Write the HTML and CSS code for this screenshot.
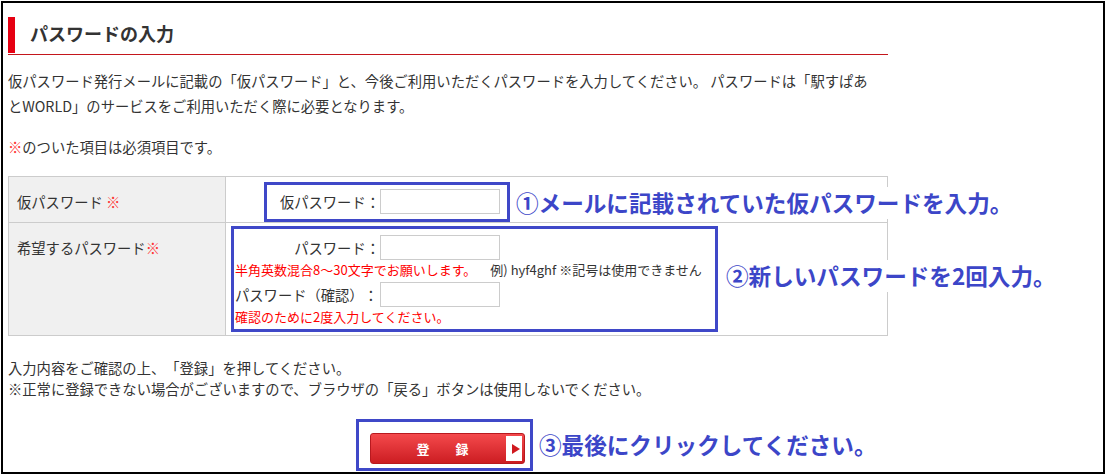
FILE: index.html
```html
<!DOCTYPE html>
<html>
  <head>
    <meta charset="utf-8">
    <title>パスワードの入力</title>
    <link rel="stylesheet" href="styles.css">
  </head>
  <body>
    <div class="frame">
      <div class="content">
        <h2 class="page-title"><span>パスワードの入力</span></h2>

        <p class="intro">
          仮パスワード発行メールに記載の「仮パスワード」と、今後ご利用いただくパスワードを入力してください。 パスワードは「駅すぱあ<br>とWORLD」のサービスをご利用いただく際に必要となります。
        </p>
        <p class="intro required-note"><span class="mark">※</span>のついた項目は必須項目です。</p>

        <table class="form-table">
          <tr>
            <th>仮パスワード <span class="mark">※</span></th>
            <td>
              <div class="field-grid">
                <label for="tmpPassword">仮パスワード：</label>
                <input type="password" id="tmpPassword" name="tmpPassword" />
              </div>
            </td>
          </tr>
          <tr>
            <th>希望するパスワード<span class="mark">※</span></th>
            <td>
              <div class="field-grid">
                <label for="newPassword">パスワード：</label>
                <input type="password" id="newPassword" name="newPassword" />
                <div class="note"><span class="warn">半角英数混合8～30文字でお願いします。</span><span class="example">例) hyf4ghf ※記号は使用できません</span></div>
                <label for="newPassword2" class="label-left">パスワード（確認）：</label>
                <input type="password" id="newPassword2" name="newPassword2" class="second" />
                <div class="note"><span class="warn">確認のために2度入力してください。</span></div>
              </div>
            </td>
          </tr>
        </table>

        <p class="after-text">
          入力内容をご確認の上、「登録」を押してください。<br>
          ※正常に登録できない場合がございますので、ブラウザの「戻る」ボタンは使用しないでください。
        </p>

        <div class="submit-row">
          <button type="submit" class="submit-btn">
            <span class="btn-label">登　　録</span>
            <span class="btn-arrow"><span class="triangle"></span></span>
          </button>
        </div>
      </div>

      <!-- annotations drawn over the form -->
      <div class="mark-box box1"></div>
      <div class="mark-box box2"></div>
      <div class="mark-box box3"></div>
      <div class="callout callout1">①メールに記載されていた仮パスワードを入力。</div>
      <div class="callout callout2">②新しいパスワードを2回入力。</div>
      <div class="callout callout3">③最後にクリックしてください。</div>
    </div>
  </body>
</html>
```

FILE: styles.css
```css
body {
  margin: 0;
  background: #fff;
  font-family: "Noto Sans CJK JP", "Noto Sans", sans-serif;
  color: #333;
  text-spacing-trim: space-all;
}
.frame {
  position: relative;
  margin: 1px;
  width: 1104px;
  height: 473px;
  box-sizing: border-box;
  border: 2px solid #000;
  padding: 0 5px;
  overflow: hidden;
}
.content {
  width: 880px;
}
.page-title {
  margin: 14px 0 0 0;
  padding-bottom: 1px;
  border-bottom: 1px solid #c4161c;
  font-size: 18px;
  font-weight: bold;
  color: #333;
}
.page-title span {
  display: block;
  border-left: 7px solid #e60012;
  padding-left: 15px;
  padding-bottom: 4px;
  line-height: 32px;
}
.intro {
  margin: 13px 0 0 0;
  font-size: 14.3px;
  line-height: 25px;
}
.required-note {
  margin-top: 16px;
}
.mark {
  color: #f33;
}
.form-table {
  margin-top: 17px;
  width: 880px;
  border-collapse: collapse;
  font-size: 14.3px;
}
.form-table th,
.form-table td {
  border: 1px solid #ccc;
  vertical-align: top;
}
.form-table th {
  width: 200px;
  background: #f0f0f0;
  text-align: left;
  font-weight: normal;
  padding: 14px 8px 8px 8px;
  line-height: 22px;
}
.form-table td {
  padding: 12px 9px 8px 9px;
}
.field-grid {
  display: grid;
  grid-template-columns: 145px auto;
  justify-content: start;
}
.field-grid label {
  text-align: right;
  line-height: 25px;
}
.field-grid input {
  width: 120px;
  height: 25px;
  box-sizing: border-box;
  border: 1px solid #ccc;
  margin: 0;
  padding: 2px 4px;
}
.field-grid input.second {
  margin-top: 2px;
}
.field-grid .label-left {
  text-align: left;
  margin-top: 2px;
}
.note {
  grid-column: 1 / -1;
  font-size: 13px;
  line-height: 20px;
  white-space: nowrap;
}
.warn {
  color: #f00;
}
.example {
  margin-left: 14px;
  color: #333;
}
.after-text {
  margin: 21px 0 0 0;
  font-size: 14.3px;
  line-height: 21px;
}
.submit-row {
  margin-top: 34px;
  padding-left: 362px;
}
.submit-btn {
  display: flex;
  width: 155px;
  height: 31px;
  padding: 2px;
  box-sizing: border-box;
  border: 1px solid #b8191f;
  border-radius: 3px;
  background: linear-gradient(#f4494c, #cc1d22);
  cursor: pointer;
}
.btn-label {
  flex: 1;
  padding-left: 6px;
  color: #fff;
  font-family: "Noto Sans CJK JP", sans-serif;
  font-size: 13px;
  font-weight: bold;
  line-height: 25px;
  text-align: center;
}
.btn-arrow {
  width: 16px;
  background: #fff;
  display: flex;
  align-items: center;
  justify-content: center;
}
.triangle {
  width: 0;
  height: 0;
  margin-left: 3px;
  border-left: 8px solid #d0191f;
  border-top: 5px solid transparent;
  border-bottom: 5px solid transparent;
}
.mark-box {
  position: absolute;
  box-sizing: border-box;
  border: 3px solid #3f48c8;
}
.box1 {
  left: 261px;
  top: 179px;
  width: 246px;
  height: 40px;
}
.box2 {
  left: 228px;
  top: 223px;
  width: 487px;
  height: 106px;
}
.box3 {
  left: 353px;
  top: 416px;
  width: 177px;
  height: 52px;
}
.callout {
  position: absolute;
  background: #fff;
  color: #3c46c8;
  font-size: 22.6px;
  font-weight: bold;
  line-height: 32px;
  white-space: nowrap;
}
.callout1 {
  left: 513px;
  top: 184px;
}
.callout2 {
  left: 723px;
  top: 257px;
}
.callout3 {
  left: 536px;
  top: 426px;
}
```
